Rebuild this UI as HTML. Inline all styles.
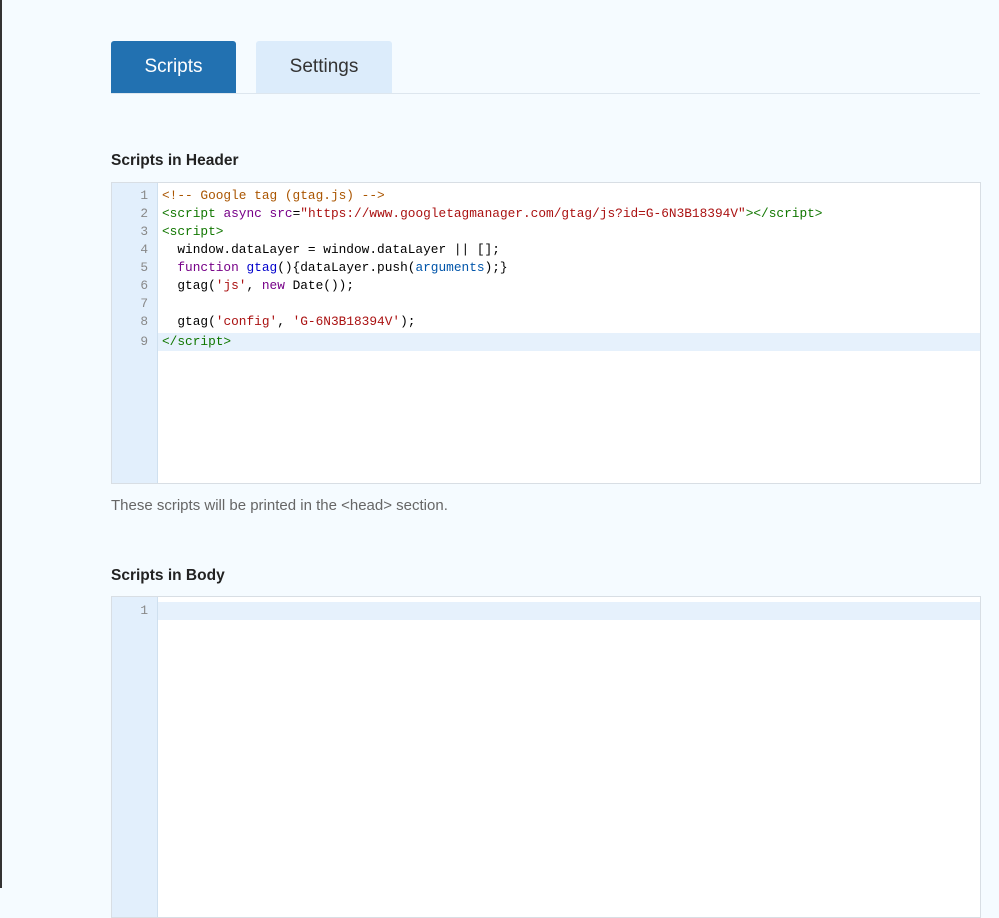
<!DOCTYPE html>
<html><head><style>
body{margin:0;width:999px;height:888px;background:#f5fbff;font-family:"Liberation Sans",sans-serif;position:relative;overflow:hidden}
.lb{position:absolute;left:0;top:0;width:2px;height:888px;background:#333}
.tab{position:absolute;top:41px;height:52px;line-height:52px;text-align:center;font-size:19px;border-radius:3px 3px 0 0}
.t1{left:111px;width:125px;background:#2271b1;color:#fff}
.t2{left:256px;width:136px;background:#dcecfb;color:#333}
.line{position:absolute;left:111px;right:19px;top:93px;height:1px;background:#dde6ee}
h3{position:absolute;left:111px;margin:0;font-size:15.5px;font-weight:bold;color:#222}
.ed{position:absolute;left:111px;width:868px;background:#fff;border:1px solid #d8dee4;font-family:"Liberation Mono",monospace;font-size:12.8px}
.gut{position:absolute;left:0;top:0;bottom:0;width:45px;background:#e2effc;border-right:1px solid #cfe0ef}
.ln{position:absolute;left:0;width:36px;text-align:right;color:#888;height:18px;line-height:18px}
.cl{position:absolute;left:50px;height:18px;line-height:18px;white-space:pre;color:#000}
.act{position:absolute;left:46px;right:0;height:18px;background:#e6f1fc}
.tg{color:#170}.cm{color:#a50}.st{color:#a11}.kw{color:#708}.at{color:#00c}.v2{color:#05a}
p{position:absolute;left:111px;top:497px;margin:0;color:#666;font-size:15px}
</style></head><body>
<div class="lb"></div>
<div class="tab t1">Scripts</div><div class="tab t2">Settings</div>
<div class="line"></div>
<h3 style="top:152px">Scripts in Header</h3>
<div class="ed" style="top:182px;height:300px">
<div class="gut"></div>
<div class="act" style="top:150px"></div>
<div class="ln" style="top:4px">1</div><div class="ln" style="top:22px">2</div><div class="ln" style="top:40px">3</div><div class="ln" style="top:58px">4</div><div class="ln" style="top:76px">5</div><div class="ln" style="top:94px">6</div><div class="ln" style="top:112px">7</div><div class="ln" style="top:130px">8</div><div class="ln" style="top:150px">9</div>
<div class="cl cm" style="top:4px">&lt;!-- Google tag (gtag.js) --&gt;</div>
<div class="cl" style="top:22px"><span class="tg">&lt;script</span> <span class="kw">async</span> <span class="kw">src</span>=<span class="st">"https://www.googletagmanager.com/gtag/js?id=G-6N3B18394V"</span><span class="tg">&gt;&lt;/script&gt;</span></div>
<div class="cl tg" style="top:40px">&lt;script&gt;</div>
<div class="cl" style="top:58px">  window.dataLayer = window.dataLayer || [];</div>
<div class="cl" style="top:76px">  <span class="kw">function</span> <span class="at">gtag</span>(){dataLayer.push(<span class="v2">arguments</span>);}</div>
<div class="cl" style="top:94px">  gtag(<span class="st">'js'</span>, <span class="kw">new</span> Date());</div>
<div class="cl" style="top:130px">  gtag(<span class="st">'config'</span>, <span class="st">'G-6N3B18394V'</span>);</div>
<div class="cl tg" style="top:150px">&lt;/script&gt;</div>
</div>
<p>These scripts will be printed in the &lt;head&gt; section.</p>
<h3 style="top:567px">Scripts in Body</h3>
<div class="ed" style="top:596px;height:320px">
<div class="gut"></div>
<div class="act" style="top:5px"></div>
<div class="ln" style="top:5px">1</div>
</div>
</body></html>
